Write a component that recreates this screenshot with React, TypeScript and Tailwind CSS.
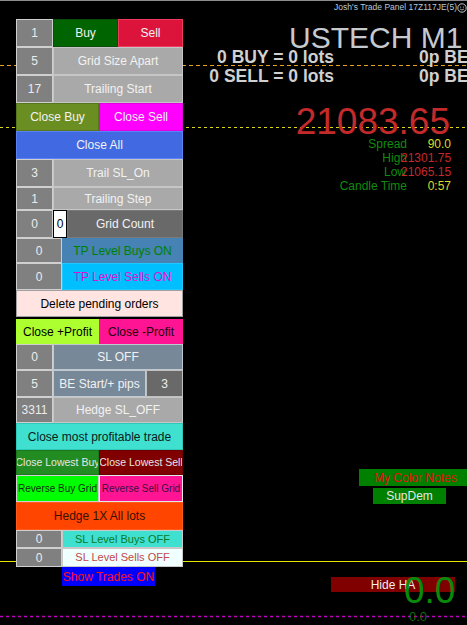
import type { ReactNode } from "react";

function Cell({ c, children }: { c: string; children?: ReactNode }) {
  return (
    <div className={`flex items-center justify-center overflow-hidden whitespace-nowrap border leading-none ${c}`}>
      {children}
    </div>
  );
}

const num = "bg-[#808080] border-[#cfcfcf] text-[#ececec] text-[12px]";
const grey = "bg-[#a9a9a9] border-[#c6c6c6] text-[#f2f2f2] text-[12px]";

function ChartLines() {
  return (
    <svg className="pointer-events-none absolute inset-0" width={467} height={625}>
      <line x1={0} y1={0.5} x2={467} y2={0.5} stroke="#8c8c8c" strokeWidth={1} />
      <line x1={0} y1={65.5} x2={467} y2={65.5} stroke="#e8a020" strokeWidth={1} strokeDasharray="4 3" />
      <line x1={0} y1={127.5} x2={467} y2={127.5} stroke="#d8d820" strokeWidth={1} strokeDasharray="3 3" />
      <line x1={0} y1={561.5} x2={467} y2={561.5} stroke="#e6e600" strokeWidth={1} />
      <line x1={0} y1={616.5} x2={467} y2={616.5} stroke="#c000c0" strokeWidth={1.5} strokeDasharray="3 3" />
    </svg>
  );
}

function TradePanel() {
  return (
    <div className="relative z-10 flex w-[167px] flex-col">
      <div className="flex h-[28px]">
        <Cell c={`w-[37px] ${num}`}>1</Cell>
        <Cell c="w-[65px] bg-[#006400] border-[#0b4d0b] text-[#f2f2f2] text-[12px]">Buy</Cell>
        <Cell c="flex-1 bg-[#dc143c] border-[#ee3a5c] text-[#f2f2f2] text-[12px]">Sell</Cell>
      </div>
      <div className="flex h-[28px]">
        <Cell c={`w-[37px] ${num}`}>5</Cell>
        <Cell c={`flex-1 ${grey}`}>Grid Size Apart</Cell>
      </div>
      <div className="flex h-[28px]">
        <Cell c={`w-[37px] ${num}`}>17</Cell>
        <Cell c={`flex-1 ${grey}`}>Trailing Start</Cell>
      </div>
      <div className="flex h-[28px]">
        <Cell c="w-[83px] bg-[#6b8e23] border-[#58761c] text-[#f2f2f2] text-[12px]">Close Buy</Cell>
        <Cell c="flex-1 bg-[#ff00ff] border-[#e000e0] text-[#f2f2f2] text-[12px]">Close Sell</Cell>
      </div>
      <div className="flex h-[28px]">
        <Cell c="flex-1 bg-[#4169e1] border-[#5a82f5] text-[#f2f2f2] text-[12px]">Close All</Cell>
      </div>
      <div className="flex h-[28px]">
        <Cell c={`w-[37px] ${num}`}>3</Cell>
        <Cell c={`flex-1 ${grey} bg-[#a0a0a0]`}>Trail SL_On</Cell>
      </div>
      <div className="flex h-[23px]">
        <Cell c={`w-[37px] ${num}`}>1</Cell>
        <Cell c={`flex-1 ${grey}`}>Trailing Step</Cell>
      </div>
      <div className="flex h-[28px]">
        <Cell c={`w-[37px] ${num}`}>0</Cell>
        <Cell c="w-[14px] bg-white border-black text-black text-[12px]">0</Cell>
        <Cell c="flex-1 bg-[#696969] border-[#7a7a7a] text-[#f2f2f2] text-[12px]">Grid Count</Cell>
      </div>
      <div className="flex h-[25px]">
        <Cell c={`w-[46px] ${num}`}>0</Cell>
        <Cell c="flex-1 bg-[#4682b4] border-[#4682b4] text-[#008000] text-[12px]">TP Level Buys ON</Cell>
      </div>
      <div className="flex h-[27px]">
        <Cell c={`w-[46px] ${num}`}>0</Cell>
        <Cell c="flex-1 bg-[#00bfff] border-[#20c8ff] text-[#e010d0] text-[12px]">TP Level Sells ON</Cell>
      </div>
      <div className="flex h-[27px]">
        <Cell c="flex-1 bg-[#ffe4e1] border-[#a0a0a0] text-black text-[12px]">Delete pending orders</Cell>
      </div>
      <div className="mt-[2px] flex h-[25px]">
        <Cell c="w-[83px] bg-[#adff2f] border-[#adff2f] text-black text-[12px]">Close +Profit</Cell>
        <Cell c="flex-1 bg-[#ff1493] border-[#ff1493] text-[#200010] text-[12px]">Close -Profit</Cell>
      </div>
      <div className="flex h-[26px]">
        <Cell c={`w-[37px] ${num}`}>0</Cell>
        <Cell c="flex-1 bg-[#778899] border-[#c0c8d0] text-[#f2f2f2] text-[12px]">SL OFF</Cell>
      </div>
      <div className="flex h-[27px]">
        <Cell c={`w-[37px] ${num}`}>5</Cell>
        <Cell c="w-[93px] bg-[#778899] border-[#c0c8d0] text-[#f2f2f2] text-[12px]">BE Start/+ pips</Cell>
        <Cell c="flex-1 bg-[#696969] border-[#c0c0c0] text-[#ececec] text-[12px]">3</Cell>
      </div>
      <div className="flex h-[26px]">
        <Cell c={`w-[37px] ${num}`}>3311</Cell>
        <Cell c={`flex-1 ${grey}`}>Hedge SL_OFF</Cell>
      </div>
      <div className="flex h-[27px]">
        <Cell c="flex-1 bg-[#40e0d0] border-[#30c8b8] text-[#0a2020] text-[12px]">Close most profitable trade</Cell>
      </div>
      <div className="flex h-[25px]">
        <Cell c="w-[83px] bg-[#228b22] border-[#1c7a1c] text-[#e6e6e6] text-[10.5px]">Close Lowest Buy</Cell>
        <Cell c="flex-1 bg-[#800000] border-[#6a0000] text-[#e6e6e6] text-[10.5px]">Close Lowest Sell</Cell>
      </div>
      <div className="flex h-[27px]">
        <Cell c="w-[83px] bg-[#00ff00] border-[#d0d0d0] text-[#103010] text-[10px]">Reverse Buy Grid</Cell>
        <Cell c="flex-1 bg-[#ff1493] border-[#e8e8e8] text-[#401040] text-[10px]">Reverse Sell Grid</Cell>
      </div>
      <div className="flex h-[28px]">
        <Cell c="flex-1 bg-[#ff4500] border-[#ff5a1a] text-[#3a1000] text-[12px]">Hedge 1X All lots</Cell>
      </div>
      <div className="flex h-[18px]">
        <Cell c={`w-[46px] ${num}`}>0</Cell>
        <Cell c="flex-1 bg-[#40e0d0] border-[#c8c8c8] text-[#0a7a2a] text-[11px]">SL Level Buys OFF</Cell>
      </div>
      <div className="flex h-[19px]">
        <Cell c={`w-[46px] ${num}`}>0</Cell>
        <Cell c="flex-1 bg-[#f0ffff] border-[#c8c8c8] text-[#c04848] text-[11px]">SL Level Sells OFF</Cell>
      </div>
      <div className="flex h-[19px] pl-[46px]">
        <Cell c="w-[93px] bg-[#0000ff] border-[#0000ff] text-[#ff1010] text-[12px]">Show Trades ON</Cell>
      </div>
    </div>
  );
}

function ChartLabels() {
  return (
    <>
      <div className="absolute right-[10px] top-[3px] flex items-center text-[8.5px] leading-none text-[#b8c8da]">
        Josh's Trade Panel 17Z117JE(5)
      </div>
      <svg className="absolute left-[457px] top-[3px]" width={10} height={10} viewBox="0 0 10 10">
        <circle cx={5} cy={5} r={4.2} fill="none" stroke="#c0c8d0" strokeWidth={1} />
        <circle cx={3.6} cy={4} r={0.6} fill="#c0c8d0" />
        <circle cx={6.4} cy={4} r={0.6} fill="#c0c8d0" />
        <path d="M3 6 Q5 8 7 6" fill="none" stroke="#c0c8d0" strokeWidth={0.8} />
      </svg>
      <div className="absolute left-[289px] top-[23px] whitespace-nowrap text-[30px] leading-[30px] text-[#c6cacf]">USTECH M1</div>

      <div className="absolute right-[133px] top-[49px] whitespace-nowrap text-[17.5px] font-bold leading-[17px] text-[#d0d0d0]">0 BUY = 0 lots</div>
      <div className="absolute right-[133px] top-[68px] whitespace-nowrap text-[17.5px] font-bold leading-[17px] text-[#d0d0d0]">0 SELL = 0 lots</div>
      <div className="absolute left-[419px] top-[49px] whitespace-nowrap text-[17.5px] font-bold leading-[17px] text-[#d0d0d0]">0p BE</div>
      <div className="absolute left-[419px] top-[68px] whitespace-nowrap text-[17.5px] font-bold leading-[17px] text-[#d0d0d0]">0p BE</div>

      <div className="absolute right-[17px] top-[103px] text-[37px] leading-[37px] text-[#c42a2a]">21083.65</div>

      <div className="absolute right-[16px] top-[137px] flex w-[140px] flex-col text-[12px] leading-[14px]">
        <div className="flex justify-end">
          <span className="text-[#108c10]">Spread</span>
          <span className="w-[44px] text-right text-[#dcdc28]">90.0</span>
        </div>
        <div className="flex justify-end">
          <span className="-mr-[6px] text-[#108c10]">High</span>
          <span className="relative w-[50px] text-right text-[#c42a2a]">21301.75</span>
        </div>
        <div className="flex justify-end">
          <span className="-mr-[5px] text-[#108c10]">Low</span>
          <span className="relative w-[50px] text-right text-[#c42a2a]">21065.15</span>
        </div>
        <div className="flex justify-end">
          <span className="text-[#108c10]">Candle Time</span>
          <span className="w-[44px] text-right text-[#dcdc28]">0:57</span>
        </div>
      </div>

      <div className="absolute left-[359px] top-[469px] flex h-[17px] w-[120px] items-center pl-[15px] text-[12px] text-[#e01010] bg-[#008000]">
        My Color Notes
      </div>
      <div className="absolute left-[373px] top-[488px] flex h-[16px] w-[73px] items-center justify-center text-[12px] text-[#e6e6e6] bg-[#008000]">
        SupDem
      </div>
      <div className="absolute left-[331px] top-[577px] flex h-[15px] w-[124px] items-center justify-center text-[12px] text-[#eeeeee] bg-[#800000]">
        Hide HA
      </div>
      <div className="absolute left-[404px] top-[572px] text-[37px] leading-[37px] text-[#0a8a0a]">0.0</div>
      <div className="absolute left-[409px] top-[610px] text-[13px] leading-[13px] text-[#0a6a0a]">0.0</div>
    </>
  );
}

export default function App() {
  return (
    <div className="relative h-[625px] w-[467px] overflow-hidden bg-black pl-[16px] pt-[19px] font-['Liberation_Sans',Arial,sans-serif]">
      <ChartLines />
      <ChartLabels />
      <TradePanel />
    </div>
  );
}
